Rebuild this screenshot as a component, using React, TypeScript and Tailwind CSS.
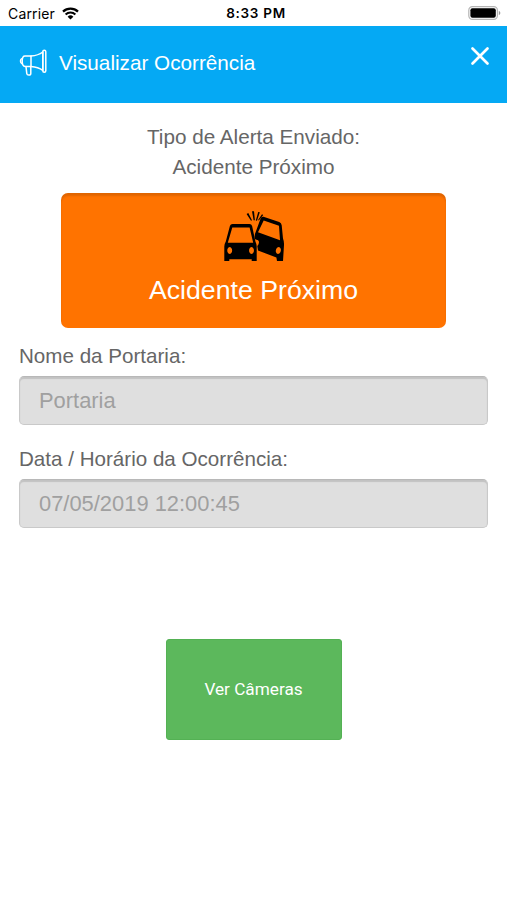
import React from "react";

const StatusBar = () => {
  return (
    <div className="relative flex h-[25.5px] items-center justify-between bg-white pl-2 pr-[6px] pt-px text-black">
      <div className="flex items-center gap-[7px]">
        <span className="font-['Inter','Roboto',sans-serif] text-[14px] tracking-[0.15px]">
          Carrier
        </span>
        <svg width="17" height="13" viewBox="0 0 17 13" fill="none">
          <path d="M1 4.6a11 11 0 0 1 15 0" stroke="currentColor" strokeWidth="2.3" />
          <path d="M3.6 7.4a7.2 7.2 0 0 1 9.8 0" stroke="currentColor" strokeWidth="2.1" />
          <path d="M8.5 12.6 5.6 9.7a4.2 4.2 0 0 1 5.8 0Z" fill="currentColor" />
        </svg>
      </div>
      <span className="absolute left-1/2 ml-[2.5px] -translate-x-1/2 whitespace-nowrap font-['Inter','Roboto',sans-serif] text-[13.5px] font-semibold tracking-[0.7px]">
        8:33 PM
      </span>
      <svg width="33" height="14" viewBox="0 0 33 14">
        <rect x="0.8" y="0.6" width="28.6" height="12.8" rx="3.6" fill="#fff" stroke="#b5b5b5" strokeWidth="1.2" />
        <rect x="2.4" y="2.2" width="25.4" height="9.6" rx="2" fill="#000" />
        <path d="M30.8 5v4c1-.4 1.500-1.100 1.500-2s-.5-1.600-1.500-2Z" fill="#999" />
      </svg>
    </div>
  );
};

const Megaphone = () => {
  return (
    <svg
      width="28"
      height="28"
      viewBox="0 0 28 28"
      fill="none"
      stroke="currentColor"
      strokeWidth="1.5"
      strokeLinejoin="round"
      strokeLinecap="round"
    >
      <path d="M12 7H6C4.200 7 3.200 8.600 3.200 12s1 5.400 2.800 5.400h6Z" />
      <path d="M3.200 9.400C.9 10.200.9 14 3.200 14.800" />
      <path d="M12 7c4.500-.3 8.700-1.600 11.800-4v18.400c-3.100-2.400-7.300-3.700-11.800-4" />
      <rect x="23.800" y="1.200" width="3" height="22" rx="1.500" />
      <path d="m7 17.600.8 7c.3 2 4 2 4-.2v-6.800" />
    </svg>
  );
};

const CarCrash = () => {
  return (
    <svg width="64" height="54" viewBox="0 0 64 54" fill="#000" fillRule="evenodd">
      <path d="M10.500 14h17q2 0 2.600 2l3.300 15.500q1.300 2.500 1.300 5V51h-5v-1.700H7.300V51H2.300V36.500q0-2.500 1.500-5L7.900 16q.6-2 2.600-2ZM10.300 17.600 5.800 32.700h25.400L27.600 17.600ZM7.700 37a2.400 3.500 0 1 0 .01 0ZM29.500 37a2.400 3.500 0 1 0 .01 0Z" />
      <path d="M41.500 6.800 57.200 12q2.200.8 2.500 3.200l1.300 13.300q1.200 3 1 6.500L61 51h-6l-.6-3.500L36 40.500l-.7-4.500q2-2 1.600-4.500-.6-2-2.500-1.800l-1.600-.7q-.6-4.200 1-7.200L38.700 8.200q.8-2 2.800-1.400ZM41.700 10.500 36 22.200 58 30.200 57 15.700ZM56.700 37a2.500 3.500 12 1 0 .01 0Z" />
      <path d="m24.600 4 1.700-.9 3.700 7.200-1 .5ZM30 1.200h2l.9 9h-1.300ZM36.200 1.900l1.600.4-2.800 8.500-1.200-.4ZM40 4.200l1.200.9-4.400 5.500-.7-.6Z" />
    </svg>
  );
};

const Field = ({ label, value }: { label: string; value: string }) => {
  return (
    <div>
      <label className="block h-7 text-[20.6px] leading-7 text-[#666]">{label}</label>
      <div className="mt-[6px] flex h-[49px] items-center rounded-[5px] border border-[#c9c9c9] border-t-[#b8b8b8] bg-[#dfdfdf] pl-[19px] pt-[2px] text-[21.9px] text-[#a0a0a0] shadow-[inset_0_2px_1px_rgba(0,0,0,0.13)]">
        {value}
      </div>
    </div>
  );
};

const App = () => {
  return (
    <div className="h-[900px] w-[507px] overflow-hidden bg-white font-['Liberation_Sans',Arial,sans-serif]">
      <StatusBar />
      <header className="flex h-[77.5px] items-start justify-between bg-[#05a9f4] text-white">
        <div className="flex items-center gap-[12px] pl-[19px] pt-[23px]">
          <Megaphone />
          <h1 className="text-[20.7px] leading-7">Visualizar Ocorrência</h1>
        </div>
        <button className="mr-[17px] mt-5" aria-label="Fechar">
          <svg width="20" height="20" viewBox="0 0 20 20" stroke="currentColor" strokeWidth="2.7" strokeLinecap="round">
            <path d="m2.500 2.500 15 15M17.500 2.500l-15 15" />
          </svg>
        </button>
      </header>
      <main className="px-[19px] pt-[19px]">
        <p className="text-center text-[20.7px] leading-[29.5px] text-[#666]">
          Tipo de Alerta Enviado:
          <br />
          Acidente Próximo
        </p>
        <div className="mx-auto mt-[12px] flex h-[135px] w-[385px] flex-col items-center rounded-[7px] bg-[#ff7300] pt-[17px] text-white shadow-[inset_0_3px_2px_rgba(0,0,0,0.12)]">
          <CarCrash />
          <span className="mt-[8px] text-[26.7px] leading-9">Acidente Próximo</span>
        </div>
        <div className="mt-[14px] flex flex-col gap-5">
          <Field label="Nome da Portaria:" value="Portaria" />
          <Field label="Data / Horário da Ocorrência:" value="07/05/2019 12:00:45" />
        </div>
        <button className="mx-auto mt-[111px] block h-[101px] w-[176px] rounded-[3px] border border-[#54b154] bg-[#5cb85c] font-['Roboto',sans-serif] text-[17.2px] text-white">
          Ver Câmeras
        </button>
      </main>
    </div>
  );
};

export default App;
